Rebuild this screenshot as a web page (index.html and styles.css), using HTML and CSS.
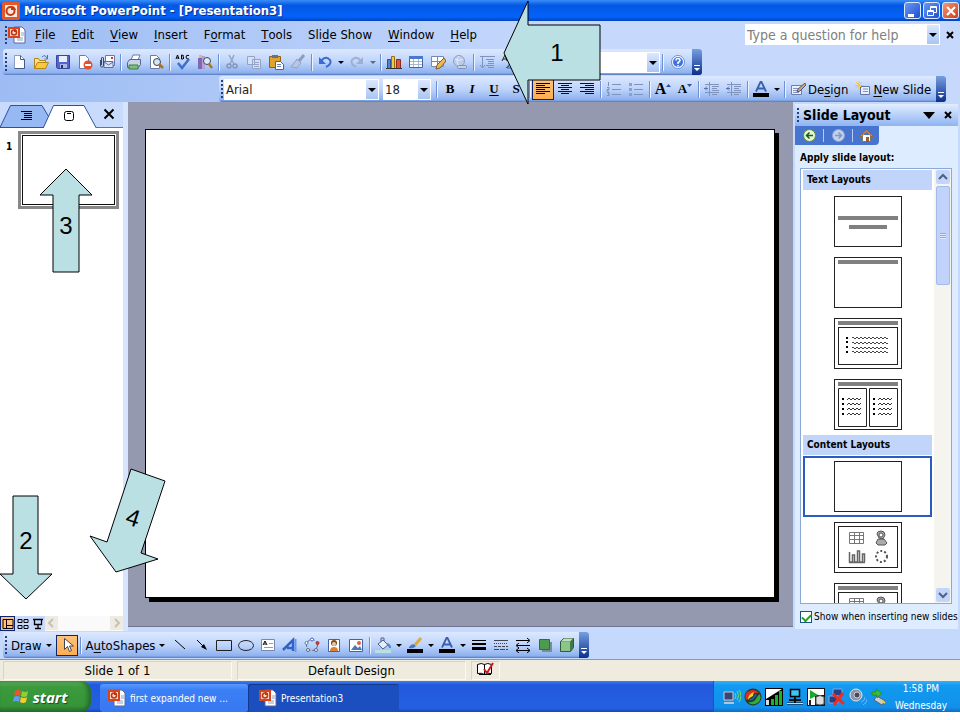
FILE: index.html
```html
<!DOCTYPE html>
<html lang="en">
<head>
   <meta charset="UTF-8">
   <meta name="viewport" content="width=device-width, initial-scale=1.0">
   <title>Microsoft PowerPoint - [Presentation3]</title>
   <link rel="stylesheet" href="styles.css">
</head>
<body>
   <!-- shared icons -->
   <svg class="defs" width="0" height="0">
      <symbol id="ppt" viewBox="0 0 18 18">
         <path d="M6 1h8l3 3v13H6z" fill="#fff" stroke="#556a9c"/>
         <path d="M9 12h6M9 14h6M13 7h3M13 9h3" stroke="#8aa0cc"/>
         <rect x="0" y="1" width="12" height="11" fill="#d8451c"/>
         <path d="M2 3h8v7H2z" fill="#fbd9c8"/>
         <circle cx="6" cy="6.500" r="2.500" fill="none" stroke="#c03410" stroke-width="1.500"/>
         <path d="M6 6V3a3 3 0 0 1 3 3z" fill="#c03410"/>
      </symbol>
      <symbol id="letter-a" viewBox="0 0 16 16">
         <path d="M3 10.500L7.500 1h1l4.500 9.500M5 7.500h6" fill="none" stroke="#3a5fb0" stroke-width="1.800"/>
         <path d="M0 12h16v4H0z" fill="#000"/>
      </symbol>
      <symbol id="bullets" viewBox="0 0 22 20">
         <path d="M0 1h2v2H0zM0 6h2v2H0zM0 11h2v2H0zM0 16h2v2H0z" fill="#000"/>
         <path d="M5 3l2-2 2 2 2-2 2 2 2-2 2 2 2-2M5 8l2-2 2 2 2-2 2 2 2-2 2 2 2-2M5 13l2-2 2 2 2-2 2 2 2-2 2 2 2-2M5 18l2-2 2 2 2-2 2 2 2-2 2 2 2-2" fill="none" stroke="#333"/>
      </symbol>
      <symbol id="content-icons" viewBox="0 0 60 42">
         <rect x=".5" y=".5" width="59" height="41" fill="#fff" stroke="#222"/>
         <path d="M11.500 6.500h14v11h-14zM11 9.500h15M11 13.500h15M16.500 6v12M21.500 6v12" fill="none" stroke="#777"/>
         <path d="M39 8q0-3 4-3t4 4l-2 4-4-1zM38 17l2-4h6l3 4-2 2h-7z" fill="#aaa" stroke="#555"/>
         <circle cx="43" cy="9" r="2" fill="#fff" stroke="#555"/>
         <path d="M11.500 26v10h3v-7h2v7h3V25h2v11h3v-8h2v8M11 36.500h16" fill="none" stroke="#666" stroke-width="1.500"/>
         <circle cx="43.500" cy="30.500" r="5.500" fill="none" stroke="#555" stroke-width="2" stroke-dasharray="2 2"/>
      </symbol>
      <symbol id="indent" viewBox="0 0 16 16">
         <path d="M1 3.500h14M8 5.500h7M8 7.500h5M8 9.500h7M1 11.500h14M8 13.500h5M5.500 1v14" stroke="#8093bd"/>
         <path d="M0 7.500h4M3 5.500l-2 2 2 2" fill="none" stroke="#5873b0"/>
      </symbol>
      <symbol id="shape-dots" viewBox="0 0 16 16">
         <circle cx="8" cy="8" r="5.500" fill="none" stroke="#556" stroke-dasharray="3 2"/>
         <circle cx="8" cy="2.500" r="1.500" fill="#fff" stroke="#3a66c0"/>
         <circle cx="2.500" cy="6" r="1.500" fill="#fff" stroke="#48a"/>
         <circle cx="13.500" cy="6" r="1.500" fill="#d33" stroke="#a33"/>
         <circle cx="4" cy="13" r="1.500" fill="#fff" stroke="#568"/>
         <circle cx="12" cy="13" r="1.500" fill="#fff" stroke="#568"/>
      </symbol>
   </svg>

   <div class="app">
      <header class="titlebar">
         <svg class="logo" width="18" height="18" viewBox="0 0 18 18">
            <rect width="18" height="18" rx="2" fill="#e2582a"/>
            <rect x="3" y="3" width="12" height="12" fill="#fde6da"/>
            <circle cx="8.500" cy="9" r="4" fill="none" stroke="#c43a12" stroke-width="2"/>
            <path d="M9 8V4a5 5 0 0 1 5 4z" fill="#c43a12"/>
         </svg>
         <h1>Microsoft PowerPoint - [Presentation3]</h1>
         <div class="window-buttons">
            <button type="button" aria-label="Minimize"><svg width="16" height="16"><path d="M3 11h6v3H3z" fill="#fff"/></svg></button>
            <button type="button" aria-label="Restore"><svg width="16" height="16"><path d="M6.500 7V3.500h6v6H10M3.500 7.500h6v5h-6zM6 4.500h7M3 8.500h7" fill="none" stroke="#fff"/></svg></button>
            <button type="button" class="close" aria-label="Close"><svg width="16" height="16"><path d="M4 4l8 8M12 4l-8 8" stroke="#fff" stroke-width="2.200"/></svg></button>
         </div>
      </header>

      <div class="bars">
         <nav class="menubar">
            <span class="grip"></span>
            <svg class="doc-icon" width="18" height="18"><use href="#ppt"/></svg>
            <button type="button"><u>F</u>ile</button>
            <button type="button"><u>E</u>dit</button>
            <button type="button"><u>V</u>iew</button>
            <button type="button"><u>I</u>nsert</button>
            <button type="button">F<u>o</u>rmat</button>
            <button type="button"><u>T</u>ools</button>
            <button type="button">Sli<u>d</u>e Show</button>
            <button type="button"><u>W</u>indow</button>
            <button type="button"><u>H</u>elp</button>
            <div class="combo ask">
               <input type="text" aria-label="Help question" placeholder="Type a question for help">
            </div>
            <button type="button" class="doc-close" aria-label="Close document"><svg width="8" height="8"><path d="M1 1l6 6M7 1L1 7" stroke="#000" stroke-width="2"/></svg></button>
         </nav>

         <div class="toolbar standard">
            <span class="grip"></span>
            <button type="button" aria-label="New"><svg width="16" height="16"><path d="M3.500 1.500h6l4 4v9h-10z" fill="#fff" stroke="#8d9dc0"/><path d="M9.500 1.500v4h4v9h-10" fill="none" stroke="#44598c"/></svg></button>
            <button type="button" aria-label="Open"><svg width="16" height="16"><path d="M1.500 14V4.500h4l1 2h6V9" fill="#ffe28a" stroke="#b58516"/><path d="M1.500 14.500l3-6h11l-3 6z" fill="#f7c843" stroke="#b58516"/><path d="M9 3q3-3 5 1M14.500 1v4h-3" fill="none" stroke="#456fc0"/></svg></button>
            <button type="button" aria-label="Save"><svg width="16" height="16"><path d="M1.500 1.500h13v13h-12l-1-1z" fill="#5563cc" stroke="#3a469c"/><path d="M4 2h8v6H4z" fill="#e8eefc"/><path d="M5 10h7v4H5z" fill="#aab8e6"/><path d="M6 11h2v3H6z" fill="#25307c"/></svg></button>
            <button type="button" aria-label="Permission"><svg width="16" height="16"><path d="M2.500 1.500h6l3 3v10h-9z" fill="#fff" stroke="#6a7ba8"/><circle cx="11" cy="11" r="4.500" fill="#e2512d"/><path d="M8 10h6v2H8z" fill="#fff"/></svg></button>
            <button type="button" aria-label="E-mail"><svg width="16" height="16"><path d="M6.500 1.500h9v10h-9z" fill="#fff" stroke="#6a7ba8"/><path d="M5 7.500h9v6H5z" fill="#dce6fa" stroke="#5a6d9e"/><path d="M5 8l4.500 3L14 8" fill="none" stroke="#5a6d9e"/><path d="M12 3h2v2h-2z" fill="#d33"/><path d="M1.500 6v6q1.500 3 3 0V4q-1-2-2 0v7" fill="none" stroke="#445"/></svg></button>
            <span class="sep"></span>
            <button type="button" aria-label="Print"><svg width="16" height="16"><path d="M5 6l2-5h7l-2 5z" fill="#fff" stroke="#6a7ba8"/><path d="M1.500 8.500l2-3h11v5l-2 3h-11z" fill="#c9d3e8" stroke="#53658f"/><path d="M3 11h9v4H3z" fill="#7cc07c" stroke="#3a7c49"/></svg></button>
            <button type="button" aria-label="Print preview"><svg width="16" height="16"><path d="M2.500 1.500h6l3 3v10h-9z" fill="#fff" stroke="#6a7ba8"/><circle cx="9" cy="8" r="3.500" fill="#cfe6f6" stroke="#445"/><path d="M11 10l4 4" stroke="#a6712c" stroke-width="2.500"/></svg></button>
            <span class="sep"></span>
            <button type="button" aria-label="Spelling"><svg width="16" height="16"><path d="M1 5l1.500-4L4 5M2 4h2M6.500 1v4H8q2-1 0-2Q9.500 1 6.500 1M14 1.500q-3-1-3 1.500t3 2" fill="none" stroke="#000"/><path d="M3 9l4 5 7-9" fill="none" stroke="#3c6fd0" stroke-width="2.500"/></svg></button>
            <button type="button" aria-label="Research"><svg width="16" height="16"><path d="M1 4h4v11H1z" fill="#8067b5"/><path d="M5 2h3v13H5z" fill="#b3a1dc"/><path d="M2 1h3v3H2z" fill="#e6bd54"/><circle cx="10" cy="7" r="3.500" fill="#dcecf8" stroke="#445"/><path d="M12 10l3 4" stroke="#b07420" stroke-width="2.500"/></svg></button>
            <span class="sep"></span>
            <button type="button" aria-label="Cut"><svg width="16" height="16"><path d="M5 1l5 9M10 1L6 10" stroke="#95a4c4" stroke-width="1.500"/><circle cx="5" cy="12" r="2" fill="none" stroke="#8495bb" stroke-width="1.500"/><circle cx="11" cy="12" r="2" fill="none" stroke="#8495bb" stroke-width="1.500"/></svg></button>
            <button type="button" aria-label="Copy"><svg width="16" height="16"><path d="M1.500 2.500h7v8h-7zM6.500 5.500h8v9h-8z" fill="#d7e1f5" stroke="#94a3c4"/><path d="M8 8.500h5M8 10.500h5M8 12.500h5" stroke="#94a3c4"/></svg></button>
            <button type="button" aria-label="Paste"><svg width="16" height="16"><path d="M1.500 2.500h11v11h-11z" fill="#e0a42c" stroke="#8d651a"/><path d="M4 1h6v3H4z" fill="#69718a"/><path d="M7.500 7.500h5l3 3v5h-8z" fill="#fff" stroke="#4b5f98"/><path d="M9 10.500h4M9 12.500h4" stroke="#6c80b8"/></svg></button>
            <button type="button" aria-label="Format painter"><svg width="16" height="16"><path d="M9 7l5-6" stroke="#8d9dbd" stroke-width="3"/><path d="M7 5l4 4-4 5-6-1z" fill="#b8c5df" stroke="#94a3c4"/></svg></button>
            <span class="sep"></span>
            <button type="button" aria-label="Undo"><svg width="16" height="16"><path d="M4 7q5-6 9-1 2 4-4 7" fill="none" stroke="#3b6ad0" stroke-width="2"/><path d="M2 3v7h7z" fill="#3b6ad0"/></svg></button>
            <button type="button" class="drop" aria-label="Undo list"></button>
            <button type="button" aria-label="Redo"><svg width="16" height="16"><path d="M12 7q-5-6-9-1-2 4 4 7" fill="none" stroke="#9eafd0" stroke-width="2"/><path d="M14 3v7H7z" fill="#9eafd0"/></svg></button>
            <button type="button" class="drop dim" aria-label="Redo list"></button>
            <span class="sep"></span>
            <button type="button" aria-label="Insert chart"><svg width="16" height="16"><path d="M1.500 5.500h3v9h-3z" fill="#4f83dd" stroke="#2b4f92"/><path d="M5.500 2.500h3v12h-3z" fill="#f1c945" stroke="#92701a"/><path d="M10.500 5.500h4v9h-4z" fill="#dd5638" stroke="#8d2a18"/><path d="M0 14.500h16" stroke="#333"/></svg></button>
            <button type="button" aria-label="Insert table"><svg width="16" height="16"><path d="M1.500 2.500h13v11h-13z" fill="#fff" stroke="#46629f"/><path d="M1 2h14v3H1z" fill="#4b78cf"/><path d="M2 7.500h12M2 10.500h12M5.500 5v8M10.500 5v8" stroke="#a5b6da"/></svg></button>
            <button type="button" aria-label="Tables and borders"><svg width="16" height="16"><path d="M1.500 2.500h12v10h-12zM1.500 7.500h12M7.500 2.500v10" fill="#fff" stroke="#7688b4"/><path d="M14 4l-7 7-1 4 4-1 6-7z" fill="#edb955" stroke="#7e5b26"/></svg></button>
            <button type="button" aria-label="Insert hyperlink"><svg width="16" height="16"><circle cx="7" cy="7" r="5.500" fill="#bccbe6" stroke="#8fa0c4"/><path d="M3 5q4 3 8 0M7 2q-4 5 0 10" fill="none" stroke="#e6eefb"/><rect x="5.500" y="11.500" width="9" height="3" rx="1" fill="#c5d1e8" stroke="#7f91b8"/></svg></button>
            <span class="sep"></span>
            <button type="button" aria-label="Expand all"><svg width="16" height="16"><path d="M3.500 2v11M1 11l2.500 3L6 11M1 2.500h15M7 5.500h8M9 7.500h6M9 9.500h6M7 11.500h8M9 13.500h6" fill="none" stroke="#8093bd"/></svg></button>
            <button type="button" aria-label="Show formatting"><svg width="16" height="16"><path d="M1 7l3-6 2 6M2 5h4" fill="none" stroke="#222"/><path d="M5 14L14 4M6 14h9L14 6z" fill="#9dbcf0" stroke="#3d5da8"/></svg></button>
            <div class="combo zoom">
               <select aria-label="Zoom"><option> </option></select>
            </div>
            <span class="sep"></span>
            <button type="button" class="wide" aria-label="Help"><svg width="16" height="16"><circle cx="8" cy="8" r="6.500" fill="#fff" stroke="#6d8fd6"/><circle cx="8" cy="8" r="5" fill="#3d75dd"/><path d="M6 6.500q0-2 2-2t2 2q0 1-2 2V10M8 11v1.500" fill="none" stroke="#fff" stroke-width="1.500"/></svg></button>
            <button type="button" class="cap" aria-label="Toolbar options"><svg width="7" height="7"><path d="M1 0h6v1H1zM1 3h6L4 6z" fill="#fff"/></svg></button>
         </div>

         <div class="toolbar formatting">
            <span class="grip"></span>
            <div class="combo font">
               <select aria-label="Font"><option>Arial</option></select>
            </div>
            <div class="combo size">
               <select aria-label="Font size"><option>18</option></select>
            </div>
            <span class="sep"></span>
            <button type="button" class="glyph"><b>B</b></button>
            <button type="button" class="glyph"><i>I</i></button>
            <button type="button" class="glyph"><u>U</u></button>
            <button type="button" class="glyph"><b>S</b></button>
            <span class="sep"></span>
            <button type="button" class="on" aria-label="Align left"><svg width="16" height="16"><path d="M1 2.500h14M1 4.500h9M1 6.500h14M1 8.500h9M1 10.500h14M1 12.500h9" stroke="#000"/></svg></button>
            <button type="button" aria-label="Center"><svg width="16" height="16"><path d="M1 2.500h14M4 4.500h8M1 6.500h14M4 8.500h8M1 10.500h14M4 12.500h8" stroke="#111"/></svg></button>
            <button type="button" aria-label="Align right"><svg width="16" height="16"><path d="M1 2.500h14M6 4.500h9M1 6.500h14M6 8.500h9M1 10.500h14M6 12.500h9" stroke="#111"/></svg></button>
            <span class="sep"></span>
            <button type="button" aria-label="Numbering"><svg width="16" height="16"><path d="M6 3.500h9M6 8.500h9M6 13.500h9" stroke="#8093bd"/><path d="M2.500 1v4M1 6.500h2v2H1v1.500h2M1 11.500h2v3H1M2 13h1" fill="none" stroke="#7c8fba"/></svg></button>
            <button type="button" aria-label="Bullets"><svg width="16" height="16"><path d="M6 3.500h9M6 8.500h9M6 13.500h9" stroke="#8093bd"/><path d="M1 2h3v3H1zM1 7h3v3H1zM1 12h3v3H1z" fill="#8ba0cf"/></svg></button>
            <span class="sep"></span>
            <button type="button" class="glyph grow" aria-label="Increase font size">A<svg width="5" height="12"><path d="M0 4l2.500-3L5 4z" fill="#2c4f9c"/></svg></button>
            <button type="button" class="glyph shrink" aria-label="Decrease font size">A<svg width="5" height="12"><path d="M0 1l2.500 3L5 1z" fill="#2c4f9c"/></svg></button>
            <span class="sep"></span>
            <button type="button" aria-label="Decrease indent"><svg width="16" height="16"><use href="#indent"/></svg></button>
            <button type="button" aria-label="Increase indent"><svg width="16" height="16"><use href="#indent"/></svg></button>
            <span class="sep"></span>
            <button type="button" aria-label="Font color"><svg width="16" height="16"><use href="#letter-a"/></svg></button>
            <button type="button" class="drop" aria-label="Font color list"></button>
            <span class="sep"></span>
            <button type="button" class="text"><svg width="16" height="16"><path d="M1.500 4.500h10v9h-10z" fill="#e9effc" stroke="#6d7fae"/><path d="M3 7.500h6M3 9.500h5M3 11.500h6" stroke="#8295c4"/><path d="M15 2l-7 6-1 3 3-1 6-6z" fill="#d8a35a" stroke="#4f5c88"/></svg><span>De<u>s</u>ign</span></button>
            <button type="button" class="text"><svg width="16" height="16"><path d="M5.500 5.500h9v8h-9z" fill="#e9effc" stroke="#5f74a8"/><path d="M8 8h5M8 10.500h5" stroke="#8295c4"/><path d="M4 0v9M0 4.500h9M1 1l6 6M7 1L1 7" stroke="#f4c43c"/></svg><span><u>N</u>ew Slide</span></button>
            <button type="button" class="cap" aria-label="Toolbar options"><svg width="7" height="7"><path d="M1 0h6v1H1zM1 3h6L4 6z" fill="#fff"/></svg></button>
         </div>
      </div>

      <main class="main">
         <aside class="outline">
            <div class="tabs">
               <svg width="124" height="26">
                  <path d="M0 25.500H124" stroke="#5275bd"/>
                  <path d="M0 25.500L10.500 3.500H42L50 17 46 25.500z" fill="#97b9f3" stroke="#2d51a0"/>
                  <path d="M43 26.500L53.500 3.500H84L96 25.500V28H43z" fill="#fff" stroke="#2d51a0"/>
                  <path d="M21 9.500h11M24 11.500h8M24 13.500h8M24 15.500h8M21 17.500h11" stroke="#000"/>
                  <rect x="64.500" y="9.500" width="9" height="9" rx="2" fill="#fff" stroke="#000"/>
                  <path d="M67 11.500h4" stroke="#000"/>
                  <path d="M104.500 7.500l9 9M113.500 7.500l-9 9" stroke="#000" stroke-width="2"/>
               </svg>
            </div>
            <div class="slides">
               <span class="number">1</span>
               <button type="button" class="slide-thumb" aria-label="Slide 1"></button>
            </div>
            <div class="views">
               <button type="button" class="on" aria-label="Normal view"><svg width="12" height="12"><path d="M1 1.500h10v9H1zM4.500 1v10M5 7.500h6" fill="none" stroke="#000"/></svg></button>
               <button type="button" aria-label="Slide sorter view"><svg width="12" height="12"><path d="M1 1.500h4v3H1zM7 1.500h4v3H7zM1 7.500h4v3H1zM7 7.500h4v3H7z" fill="none" stroke="#000"/></svg></button>
               <button type="button" aria-label="Slide show"><svg width="12" height="12"><path d="M1 1.500h10M2.500 2v4.500h7V2M6 7v4M3 10.500h6" fill="none" stroke="#000" stroke-width="1.300"/></svg></button>
               <div class="hscroll">
                  <svg width="13" height="14"><path d="M8 3L4 7l4 4" fill="none" stroke="#c4c2b4" stroke-width="2"/></svg>
                  <svg width="13" height="14"><path d="M5 3l4 4-4 4" fill="none" stroke="#c4c2b4" stroke-width="2"/></svg>
               </div>
            </div>
         </aside>

         <section class="workspace">
            <div class="slide"></div>
         </section>

         <aside class="taskpane">
            <div class="pane-title">
               <span class="grip"></span>
               <h2>Slide Layout</h2>
               <svg width="12" height="7"><path d="M0 0h12L6 7z"/></svg>
               <svg width="8" height="8"><path d="M1 1l6 6M7 1L1 7" stroke="#000" stroke-width="2"/></svg>
            </div>
            <div class="pane-nav">
               <button type="button" aria-label="Back"><svg width="13" height="13"><circle cx="6.500" cy="6.500" r="6" fill="#e4f4d4" stroke="#5b8c3c"/><path d="M10 6.500H4M6.500 3.500l-3 3 3 3" fill="none" stroke="#1c5c14" stroke-width="1.500"/></svg></button>
               <span class="sep"></span>
               <button type="button" aria-label="Forward"><svg width="13" height="13"><circle cx="6.500" cy="6.500" r="6" fill="#c3d0ea" stroke="#8fa3d2"/><path d="M3 6.500h6M6.500 3.500l3 3-3 3" fill="none" stroke="#8397c6" stroke-width="1.500"/></svg></button>
               <span class="sep"></span>
               <button type="button" aria-label="Home"><svg width="13" height="13"><path d="M2.500 6v6.500h8V6" fill="#fff" stroke="#776"/><path d="M0 7l6.500-6L13 7l-1 1-5.500-5L1 8z" fill="#e8923a" stroke="#9c4a16" stroke-width=".5"/><path d="M6 8h3v5H6z" fill="#a55a28"/></svg></button>
            </div>
            <h3>Apply slide layout:</h3>
            <div class="layouts">
               <div class="layout-list">
                  <h4>Text Layouts</h4>
                  <button type="button" aria-label="Title Slide"><svg width="68" height="51"><rect x=".5" y=".5" width="67" height="50" fill="#fff" stroke="#222"/><path d="M4 22h60M15 31h38" stroke="#808080" stroke-width="4"/></svg></button>
                  <button type="button" aria-label="Title Only"><svg width="68" height="51"><rect x=".5" y=".5" width="67" height="50" fill="#fff" stroke="#222"/><path d="M4 5h60" stroke="#808080" stroke-width="4"/></svg></button>
                  <button type="button" aria-label="Title and Text"><svg width="68" height="51"><rect x=".5" y=".5" width="67" height="50" fill="#fff" stroke="#222"/><path d="M4 5h60" stroke="#808080" stroke-width="4"/><rect x="4.500" y="9.500" width="59" height="37" fill="#fff" stroke="#222"/><path d="M12 19h2v2h-2zM12 23h2v2h-2zM12 28h2v2h-2zM12 33h2v2h-2z"/><path d="M18 20q1-2 2 0t2 0 2 0 2 0 2 0 2 0 2 0 2 0 2 0 2 0 2 0 2 0 2 0 2 0 2 0 2 0 2 0 2 0M18 25q1-2 2 0t2 0 2 0 2 0 2 0 2 0 2 0 2 0 2 0 2 0 2 0 2 0 2 0 2 0 2 0 2 0 2 0 2 0M18 30q1-2 2 0t2 0 2 0 2 0 2 0 2 0 2 0 2 0 2 0 2 0 2 0 2 0 2 0 2 0 2 0 2 0 2 0 2 0M18 34q1-2 2 0t2 0 2 0 2 0 2 0 2 0 2 0 2 0 2 0 2 0 2 0 2 0 2 0 2 0 2 0 2 0 2 0 2 0" fill="none" stroke="#444"/></svg></button>
                  <button type="button" aria-label="Title and 2-Column Text"><svg width="68" height="51"><rect x=".5" y=".5" width="67" height="50" fill="#fff" stroke="#222"/><path d="M4 5h60" stroke="#808080" stroke-width="4"/><path d="M4.500 9.500h28v38h-28zM35.500 9.500h28v38h-28z" fill="#fff" stroke="#222"/><use href="#bullets" x="8" y="18" width="22" height="20"/><use href="#bullets" x="39" y="18" width="22" height="20"/></svg></button>
                  <h4>Content Layouts</h4>
                  <button type="button" class="selected" aria-label="Blank"><svg width="68" height="51"><rect x=".5" y=".5" width="67" height="50" fill="#fff" stroke="#222"/></svg></button>
                  <button type="button" aria-label="Content"><svg width="68" height="51"><rect x=".5" y=".5" width="67" height="50" fill="#fff" stroke="#222"/><use href="#content-icons" x="4" y="4" width="60" height="42"/></svg></button>
                  <button type="button" aria-label="Title and Content"><svg width="68" height="51"><rect x=".5" y=".5" width="67" height="50" fill="#fff" stroke="#222"/><path d="M4 5h60" stroke="#808080" stroke-width="4"/><use href="#content-icons" x="4" y="9" width="60" height="42"/></svg></button>
               </div>
               <div class="vscroll">
                  <svg width="14" height="14"><path d="M3 9l4-4 4 4" fill="none" stroke="#4d6185" stroke-width="2"/></svg>
                  <div class="thumb"></div>
                  <svg width="14" height="14"><path d="M3 5l4 4 4-4" fill="none" stroke="#4d6185" stroke-width="2"/></svg>
               </div>
            </div>
            <label class="show-new"><input type="checkbox" checked>Show when inserting new slides</label>
         </aside>
      </main>

      <div class="drawbar">
         <div class="toolbar drawing">
            <span class="grip"></span>
            <button type="button" class="text"><span>D<u>r</u>aw</span><span class="tri"></span></button>
            <button type="button" class="on" aria-label="Select objects"><svg width="16" height="16"><path d="M5.500 1.500v11l3-3 2 5 2-1-2-4.500h4z" fill="#fff" stroke="#445"/></svg></button>
            <span class="sep"></span>
            <button type="button" class="text"><span>A<u>u</u>toShapes</span><span class="tri"></span></button>
            <button type="button" aria-label="Line"><svg width="16" height="16"><path d="M3 3l10 9" stroke="#000"/></svg></button>
            <button type="button" aria-label="Arrow"><svg width="16" height="16"><path d="M3 3l7 7" stroke="#000"/><path d="M13 13l-6-3 3-3z"/></svg></button>
            <button type="button" aria-label="Rectangle"><svg width="16" height="16"><path d="M.5 3.500h15v10H.5z" fill="none" stroke="#222"/></svg></button>
            <button type="button" aria-label="Oval"><svg width="16" height="16"><ellipse cx="8" cy="8.500" rx="7.500" ry="5" fill="none" stroke="#222"/></svg></button>
            <button type="button" aria-label="Text box"><svg width="16" height="16"><path d="M1.500 2.500h13v11h-13z" fill="#fff" stroke="#7688b4"/><path d="M3 8l2-4 2 4M4 7h2" fill="none" stroke="#000"/><path d="M9 6.500h4M4 10.500h9" stroke="#8a9bc6"/></svg></button>
            <button type="button" aria-label="WordArt"><svg width="16" height="16"><path d="M1 13L11 3v11M5 11h6" fill="none" stroke="#2f62cc" stroke-width="2.500"/><path d="M13.500 2v13" stroke="#6f96e4" stroke-width="2"/></svg></button>
            <button type="button" aria-label="Diagram"><svg width="16" height="16"><use href="#shape-dots"/></svg></button>
            <button type="button" aria-label="Clip art"><svg width="16" height="16"><path d="M2.500 2.500h11v12h-11z" fill="#fff" stroke="#46629f"/><circle cx="8" cy="6" r="3" fill="#7c4a24"/><circle cx="8" cy="7" r="2" fill="#f2c69c"/><path d="M4 14q0-4 4-4t4 4z" fill="#d98236"/></svg></button>
            <button type="button" aria-label="Picture"><svg width="16" height="16"><path d="M1.500 2.500h13v12h-13z" fill="#fff" stroke="#46629f"/><path d="M3 13l4-5 3 3 2-2 2 4z" fill="#4b78b8"/><circle cx="11" cy="6" r="2" fill="#e0603c"/></svg></button>
            <span class="sep"></span>
            <button type="button" aria-label="Fill color"><svg width="16" height="16"><path d="M3 7l5-4 5 5-5 4z" fill="#e6edf9" stroke="#4c5f8e"/><path d="M6 5V1h3v3" fill="none" stroke="#4c5f8e"/><path d="M12 7q3 1 3 4" fill="none" stroke="#4c87c8" stroke-width="2"/><path d="M0 13h16v3H0z" fill="#bbe0e3"/></svg></button>
            <button type="button" class="drop" aria-label="Fill color list"></button>
            <button type="button" aria-label="Line color"><svg width="16" height="16"><path d="M2 10q2-3 5-3l2 2q-2 3-7 2z" fill="#4877cc"/><path d="M8 8l6-7" stroke="#e0aa3c" stroke-width="3"/><path d="M0 12h16v4H0z"/></svg></button>
            <button type="button" class="drop" aria-label="Line color list"></button>
            <button type="button" aria-label="Font color"><svg width="16" height="16"><use href="#letter-a"/></svg></button>
            <button type="button" class="drop" aria-label="Font color list"></button>
            <button type="button" aria-label="Line style"><svg width="16" height="16"><path d="M1 3.500h14" stroke="#000"/><path d="M1 7h14" stroke="#000" stroke-width="2"/><path d="M1 11.500h14" stroke="#000" stroke-width="3"/></svg></button>
            <button type="button" aria-label="Dash style"><svg width="16" height="16"><path d="M1 3.500h14" stroke="#445"/><path d="M1 6.500h14" stroke="#445" stroke-dasharray="1 1"/><path d="M1 9.500h14" stroke="#445" stroke-dasharray="3 1"/><path d="M1 12.500h14" stroke="#445" stroke-dasharray="5 1"/></svg></button>
            <button type="button" aria-label="Arrow style"><svg width="16" height="16"><path d="M1 3.500h13M12 1l3 2.500L12 6M2 8.500h13M4 6L1 8.500 4 11M1 13.500h14M4 11l-3 2.500L4 16M12 11l3 2.500-3 2.500" fill="none" stroke="#000"/></svg></button>
            <button type="button" aria-label="Shadow style"><svg width="16" height="16"><path d="M5 5h10v10H5z" fill="#7c8a9c"/><path d="M2.500 2.500h10v10h-10z" fill="#4b9c50" stroke="#2f6d3a"/></svg></button>
            <button type="button" aria-label="3-D style"><svg width="16" height="16"><path d="M1.500 4.500l3-3h10v9l-3 4h-10z" fill="#3c7d44" stroke="#2b5c32"/><path d="M2 5h9v9H2z" fill="#8cc58c"/><path d="M2 4.500l3-3h9l-3 3z" fill="#bfe2bc"/></svg></button>
            <button type="button" class="cap" aria-label="Toolbar options"><svg width="7" height="7"><path d="M1 0h6v1H1zM1 3h6L4 6z" fill="#fff"/></svg></button>
         </div>
      </div>

      <div class="statusbar">
         <span class="panel">Slide 1 of 1</span>
         <span class="panel">Default Design</span>
         <span class="panel spell"><svg width="18" height="14"><path d="M1.500 2.500q4-2 7 0 3-2 7 0v9q-4-1-7 1-3-2-7-1zM8.500 2.500v10M3 12.500h12" fill="#fff" stroke="#000"/><path d="M8 7l3 4 6-10" fill="none" stroke="#d01818" stroke-width="2"/></svg></span>
      </div>

      <footer class="taskbar">
         <button type="button" class="start">
            <svg width="18" height="18"><path d="M3 3q3-2 6 0L8 8q-3-2-6 0z" fill="#f0532c"/><path d="M10 3q3 2 6 0l-1 5q-3 2-6 0z" fill="#8bd03c"/><path d="M2 9q3-2 6 0l-1 5q-3-2-6 0z" fill="#5f9cf4"/><path d="M9 9q3 2 6 0l-1 5q-3 2-6 0z" fill="#fbc92e"/></svg>
            start
         </button>
         <button type="button" class="task"><svg width="18" height="18"><use href="#ppt"/></svg>first expanded new ...</button>
         <button type="button" class="task active"><svg width="18" height="18"><use href="#ppt"/></svg>Presentation3</button>
         <div class="tray">
            <svg width="18" height="18"><path d="M1 4h9v8H1z" fill="#3a4670" stroke="#c3cde4"/><path d="M1 14h10v2H1z" fill="#b9c3d8"/><path d="M12 5q2 3 0 6M14 3q3 5 0 9M16 2q4 6 0 12" fill="none" stroke="#74e048"/></svg>
            <svg width="18" height="18"><circle cx="9" cy="9" r="8.500" fill="#2b3a22"/><path d="M2 12Q-1 4 8 2q5 0 7 3-5-1-8 3-2 3-5 4z" fill="#e12d20"/><path d="M4 12Q4 6 10 4q-1 2-1 4-3 1-5 4z" fill="#f4d42c"/><path d="M16 6q2 8-5 10-5 1-7-2 5 1 8-3 1-3 4-5z" fill="#2fae3c"/><path d="M6 12q4-1 6-6" fill="none" stroke="#0b6ac0" stroke-width="1.500"/></svg>
            <svg width="18" height="18"><path d="M0 0h18v18H0z" fill="#000"/><path d="M1 1h16L1 11z" fill="#fff"/><path d="M1 12h3v5H1z" fill="#ddd"/><path d="M6 11h3v6H6zM10 7h3v10h-3zM14 3h3v14h-3z" fill="#18b428"/></svg>
            <svg width="18" height="18"><path d="M4.500 1.500h9v7h-9z" fill="#38c6f4" stroke="#000" stroke-width="1.500"/><path d="M3 11h12v2H3z" fill="#111"/><path d="M9 9v6M1 15.500h16" stroke="#111" stroke-width="2"/><path d="M1 15.500h16" stroke="#ece36a"/></svg>
            <svg width="18" height="18"><path d="M0 0h18v18H0z" fill="#111"/><path d="M1 1h16v6H8v10H1z" fill="#fff"/><path d="M3 2l8 5-8 4z" fill="#1aa82a"/><path d="M9 9q4-3 8 0v7q-4 2-8 0z" fill="#ddd" stroke="#555"/><path d="M3 12v6" stroke="#222" stroke-width="2"/></svg>
            <svg width="18" height="18"><path d="M5 1h9v7H5zM1 8h9v7H1z" fill="#26418c" stroke="#8fa4d4"/><path d="M5 6l11 10M15 5L6 17" stroke="#ee2c24" stroke-width="3"/></svg>
            <svg width="18" height="18"><circle cx="7" cy="7" r="6" fill="#8c94a0" stroke="#e3e7ee"/><circle cx="8" cy="7" r="3" fill="#444c5c" stroke="#c8ced8"/><path d="M12 14q4-1 4-5M14 17q4-2 4-6" fill="none" stroke="#78b4f8"/></svg>
            <svg width="18" height="18"><path d="M7 8l8 5-3 4-8-5z" fill="#c9ced8" stroke="#59606c"/><path d="M11 12l4 3" stroke="#f0d040" stroke-width="2"/><path d="M2 4h4V1l6 4-5 5V7H2z" fill="#35bd33" stroke="#187020" stroke-width=".5"/></svg>
            <div class="clock"><span>1:58 PM</span><span>Wednesday</span></div>
         </div>
      </footer>
   </div>

   <!-- callout arrows over the window -->
   <svg class="callout one" width="98" height="106"><path d="M1 53L25 1v24h72v55H25v24z"/><text x="54" y="61">1</text></svg>
   <svg class="callout two" width="54" height="106"><path d="M13 1h25v78h14L26 104 0 79h13z"/><text x="26" y="54">2</text></svg>
   <svg class="callout three" width="54" height="106"><path d="M27 1l26 26H40v77H14V27H1z"/><text x="27" y="66">3</text></svg>
   <svg class="callout four" width="78" height="106"><path d="M42 1l34 12-24 72 17 6-42 13L1 68l17 6z"/><text x="44" y="58" transform="rotate(18 44 50)">4</text></svg>
</body>
</html>
```
FILE: styles.css
```css
* {
   box-sizing: border-box;
}

body {
   margin: 0;
   background: #fff;
   color: #000;
   font: 13px "DejaVu Sans Condensed", "DejaVu Sans", sans-serif;
}

button {
   margin: 0;
   padding: 0;
   border: 0;
   background: none;
   color: inherit;
   font: inherit;
   display: flex;
   align-items: center;
   justify-content: center;
   white-space: nowrap;
}

svg {
   display: block;
   flex: none;
}

h1, h2, h3, h4 {
   margin: 0;
   white-space: nowrap;
}

u {
   text-underline-offset: 2px;
}

.defs {
   position: absolute;
}

.app {
   height: calc(100vh - 8px);
   display: flex;
   flex-direction: column;
   background: #c5d9fd;
   overflow: hidden;
}

/* title bar */
.titlebar {
   flex: none;
   height: 21px;
   padding: 0 1px 0 2px;
   display: flex;
   align-items: center;
   gap: 4px;
   background: linear-gradient(#3b8cf8, #0358e4 25%, #0462f8 80%, #0242c0);
   color: #fff;
}

.titlebar h1 {
   flex: 1;
   font-size: 13px;
   text-shadow: 1px 1px #0a2f8c;
}

.window-buttons {
   display: flex;
   gap: 2px;
}

.window-buttons button {
   width: 17px;
   height: 17px;
   border: 1px solid #dfe9fc;
   border-radius: 3px;
   background: linear-gradient(135deg, #6c97f4, #1c4fd0);
}

.window-buttons .close {
   background: linear-gradient(135deg, #f09878, #d23a12);
}

/* menu bar and toolbars */
.bars {
   flex: none;
   background: linear-gradient(90deg, #9dbcf3, #c6d9fd 60%);
}

.menubar {
   height: 27px;
   padding: 0 5px 0 3px;
   display: flex;
   align-items: center;
}

.menubar > button {
   padding: 0 8px;
}

.doc-icon {
   margin-right: 1px;
}

.grip {
   flex: none;
   width: 2px;
   height: 18px;
   margin: 0 1px 0 2px;
   background: repeating-linear-gradient(#27407c 0 2px, transparent 2px 4px);
}

.menubar > .doc-close {
   padding: 0 1px 0 6px;
}

.combo {
   position: relative;
   height: 21px;
   background: #fff;
}

.combo::after {
   content: '';
   position: absolute;
   top: 1px;
   right: 1px;
   bottom: 1px;
   width: 12px;
   background: linear-gradient(#dbe7fd, #a9c5f5);
   pointer-events: none;
}

.combo::before,
.drop::before,
.tri {
   content: '';
   border: 3px solid transparent;
   border-top-color: #000;
   border-bottom: 0;
}

.combo::before {
   position: absolute;
   z-index: 1;
   top: 9px;
   right: 3px;
   border-width: 4px 4px 0;
   pointer-events: none;
}

.combo input,
.combo select {
   width: 100%;
   height: 100%;
   padding: 0 14px 0 2px;
   border: 0;
   outline: 0;
   background: none;
   color: #222;
   font: inherit;
   appearance: none;
}

.combo.ask {
   width: 195px;
   margin-left: auto;
   font-size: 14px;
}

.ask input::placeholder {
   color: #808080;
}

.toolbar {
   width: max-content;
   height: 26px;
   display: flex;
   align-items: center;
   border-radius: 3px;
   background: linear-gradient(#dce8fe, #bed4fb 50%, #8db1ee 92%, #5476c0);
}

.standard {
   margin: 1px 0 1px 3px;
}

.formatting {
   margin-left: 219px;
}

.toolbar button {
   flex: none;
   width: 22px;
   height: 22px;
}

.toolbar .sep {
   flex: none;
   width: 1px;
   height: 17px;
   margin: 0 2px;
   background: #6c90d4;
   box-shadow: 1px 0 #eef4ff;
}

.toolbar .drop {
   width: 10px;
}

.toolbar .dim {
   opacity: .5;
}

.toolbar .wide {
   width: 26px;
}

.toolbar .text {
   width: auto;
   padding: 0 4px 0 3px;
   gap: 2px;
}

.toolbar .on {
   height: 21px;
   border: 1px solid #10246c;
   background: linear-gradient(#fdc27a, #fbae50);
}

.tri {
   margin-left: 2px;
}

.toolbar .cap {
   width: 10px;
   height: 26px;
   margin-left: 1px;
   padding: 0 1px 3px 0;
   align-items: flex-end;
   border-radius: 0 3px 3px 0;
   background: linear-gradient(#769fe2, #0b308c);
}

.combo.zoom {
   width: 140px;
}

.combo.font {
   width: 155px;
   margin-right: 4px;
}

.combo.size {
   width: 48px;
   margin-right: 3px;
}

.toolbar .glyph {
   font: bold 13px "Liberation Serif", serif;
}

.toolbar .grow {
   font-size: 16px;
}

/* working area */
.main {
   flex: 1;
   min-height: 0;
   display: flex;
}

.outline {
   width: 128px;
   flex: none;
   display: flex;
   flex-direction: column;
   border-right: 5px solid #d6e5fd;
   background: #fff;
}

.tabs {
   height: 26px;
   overflow: hidden;
   background: #c8dbfc;
}

.slides {
   flex: 1;
   padding: 3px 4px 0 6px;
   display: flex;
   align-items: flex-start;
   justify-content: space-between;
}

.number {
   padding-top: 10px;
   font-size: 10px;
   font-weight: bold;
}

.slide-thumb {
   width: 101px;
   height: 78px;
   border: 3px solid #888;
   outline: 1px solid #111;
   outline-offset: -5px;
   background: #fff;
}

.views {
   height: 15px;
   display: flex;
   background: #c8dbfc;
}

.views button {
   width: 15px;
   height: 15px;
}

.views .on {
   border: 1px solid #10246c;
   background: #fdc27a;
}

.hscroll {
   flex: 1;
   display: flex;
   justify-content: space-between;
   background: #fafafa;
}

.hscroll svg {
   background: #eeece2;
}

.workspace {
   flex: 1;
   margin-bottom: 4px;
   padding: 27px 18px 28px 17px;
   display: flex;
   border-bottom: 1px solid #6f7590;
   background: #9499af;
}

.slide {
   flex: 1;
   border: 1px solid #000;
   background: #fff;
   box-shadow: 4px 4px #000;
}

/* task pane */
.taskpane {
   width: 165px;
   flex: none;
   margin: 2px 2px 2px 0;
   display: flex;
   flex-direction: column;
   border-left: 2px solid #c3dafc;
   background: #ddecfe;
}

.pane-title {
   height: 22px;
   padding: 0 6px 0 0;
   display: flex;
   align-items: center;
   gap: 9px;
   background: linear-gradient(#e2edff, #8fb4f2);
}

.pane-title .grip {
   height: 14px;
}

.pane-title h2 {
   flex: 1;
   margin-left: -6px;
   font-size: 14px;
}

.pane-nav {
   width: 84px;
   height: 19px;
   padding: 0 6px 0 8px;
   display: flex;
   align-items: center;
   justify-content: space-between;
   border-radius: 0 0 4px 0;
   background: #4674cf;
}

.pane-nav .sep {
   width: 1px;
   height: 13px;
   background: #b5cbf5;
}

.taskpane h3 {
   padding: 7px 5px 4px;
   font-size: 10px;
   line-height: 12px;
}

.layouts {
   flex: 1;
   min-height: 0;
   margin: 0 6px 0 5px;
   display: flex;
   border: 1px solid #8ba9d8;
   background: #fff;
}

.layout-list {
   flex: 1;
   padding: 1px 2px 0;
   overflow: hidden;
}

.layout-list h4 {
   padding: 0 4px;
   background: #c1d4fa;
   font-size: 10px;
   line-height: 20px;
}

.layout-list h4 + button {
   margin-top: 1px;
}

.layout-list button {
   width: 100%;
   height: 61px;
}

.layout-list .selected {
   border: 2px solid #2c5cc0;
}

.vscroll {
   width: 17px;
   padding: 1px;
   display: flex;
   flex-direction: column;
   align-items: center;
   justify-content: space-between;
   background: #f5f4ee;
}

.vscroll svg {
   border-radius: 2px;
   background: #c4d5fb;
}

.vscroll .thumb {
   width: 14px;
   height: 23%;
   margin: 2px 0 auto;
   border: 1px solid #a3baec;
   border-radius: 2px;
   background: repeating-linear-gradient(#8caae6 0 1px, #dfe9ff 1px 2px) center / 6px 6px no-repeat, #c2d3fb;
}

.show-new {
   height: 25px;
   padding-left: 5px;
   display: flex;
   align-items: center;
   gap: 2px;
   font-size: 10px;
   white-space: nowrap;
}

.show-new input {
   appearance: none;
   flex: none;
   width: 12px;
   height: 12px;
   margin: 0;
   border: 1px solid #1c5180;
   background: #fff;
}

.show-new input:checked::before {
   content: '';
   display: block;
   width: 7px;
   height: 4px;
   margin: 2px 1px;
   border: solid #21a121;
   border-width: 0 0 2px 2px;
   transform: rotate(-45deg);
}

/* drawing toolbar, status bar */
.drawbar {
   flex: none;
   padding: 1px 0 1px 3px;
   border-bottom: 1px solid #8a97b4;
   background: #c5d9fd;
}

.statusbar {
   flex: none;
   height: 21px;
   padding: 1px 3px;
   display: flex;
   gap: 5px;
   background: #efebde;
}

.panel {
   width: 24%;
   display: flex;
   align-items: center;
   justify-content: center;
   border: 1px solid;
   border-color: #d8d3c2 #fbf9f3 #fbf9f3 #d8d3c2;
}

.spell {
   width: 29px;
   align-items: flex-start;
}

/* taskbar */
.taskbar {
   flex: none;
   height: 31px;
   display: flex;
   background: linear-gradient(#3a80f2, #2359dc 12%, #2460e2 88%, #1a44b4);
   color: #fff;
   font-size: 10px;
}

.start {
   width: 91px;
   padding-right: 12px;
   gap: 3px;
   border-radius: 0 10px 10px 0;
   background: linear-gradient(#5fb35f, #3a9a3c 20%, #37943a 80%, #26702a);
   box-shadow: inset -3px 0 4px #24682a;
   font: italic bold 15px "Noto Sans", sans-serif;
   text-shadow: 1px 1px 1px #1c4c1c;
}

.task {
   width: 148px;
   margin-top: 3px;
   padding-left: 8px;
   justify-content: flex-start;
   gap: 4px;
   border-radius: 3px;
   background: linear-gradient(#5a9afc, #3b80f6 20%, #3877f0);
}

.start + .task {
   margin-left: 9px;
}

.task.active {
   width: 151px;
   padding-left: 11px;
   background: #1b4fc0;
   box-shadow: inset 1px 1px #14388c;
}

.tray {
   margin-left: auto;
   padding: 0 13px 0 9px;
   display: flex;
   align-items: center;
   gap: 3px;
   border-left: 1px solid #0d5cb8;
   background: linear-gradient(#39aef8, #109af0 15%, #1290ea 85%, #0d6cc8);
}

.clock {
   margin-left: 4px;
   display: flex;
   flex-direction: column;
   align-items: center;
   line-height: 17px;
}

/* callouts */
.callout {
   position: absolute;
   fill: #bbe0e3;
   stroke: #000;
   overflow: visible;
}

.callout text {
   fill: #000;
   stroke: none;
   font: 24px "Liberation Sans", sans-serif;
   text-anchor: middle;
}

.one {
   left: 503px;
   top: 0;
}

.two {
   left: 0;
   top: 495px;
}

.three {
   left: 39px;
   top: 168px;
}

.four {
   left: 89px;
   top: 468px;
}
```
